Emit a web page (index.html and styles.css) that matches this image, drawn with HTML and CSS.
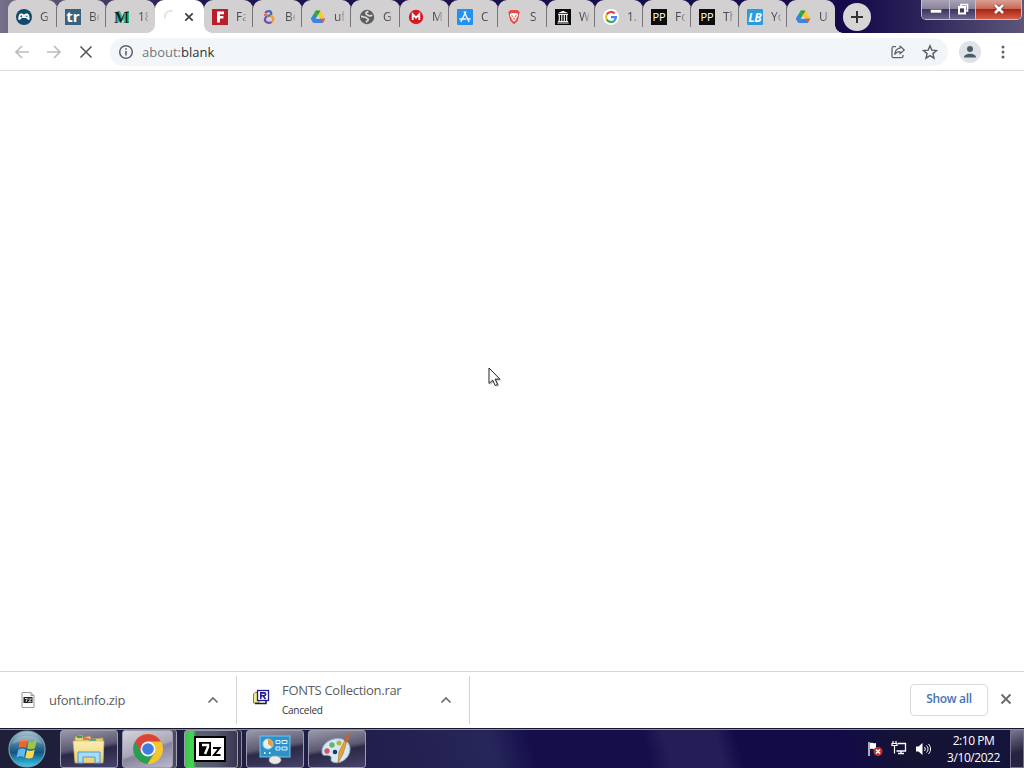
FILE: index.html
```
<!DOCTYPE html>
<html lang="en">
<head>
    <meta charset="utf-8">
    <title>about:blank</title>
    <link rel="stylesheet" href="styles.css">
</head>
<body>
    <svg class="defs" width="0" height="0">
        <defs>
            <linearGradient id="blueball" x1="0" y1="0" x2="0" y2="1">
                <stop offset="0" stop-color="#a9c6cf"/>
                <stop offset=".45" stop-color="#2f6d91"/>
                <stop offset=".6" stop-color="#135582"/>
                <stop offset="1" stop-color="#38d0f0"/>
            </linearGradient>
            <linearGradient id="paper" x1="0" y1="0" x2="0" y2="1">
                <stop offset="0" stop-color="#fbeeb0"/>
                <stop offset="1" stop-color="#e8ce78"/>
            </linearGradient>
            <symbol id="drive" viewBox="0 0 16 16">
                <path d="M5.800 1.500L8 6 3.400 14 .9 9.800z" fill="#1fa85c"/>
                <path d="M.9 9.800L3.400 14l2.400-4.200L3.400 5.700z" fill="#3b82ee"/>
                <path d="M10.400 1.500l4.800 8.300H10L5.400 1.500z" fill="#ffc928"/>
                <path d="M5.400 1.500h5L8 6z" fill="#1a9a52"/>
                <path d="M3.400 14l2.400-4.200h9.400L12.700 14z" fill="#3b82ee"/>
                <path d="M10 9.800h5.200L12.700 14z" fill="#ea5535"/>
                <path d="M8 6l2.200 3.800H5.800z" fill="#d5d1d1"/>
            </symbol>
            <symbol id="caret" viewBox="0 0 12 8">
                <path d="M1.500 6.500L6 2l4.500 4.500" fill="none" stroke="#6b6e72" stroke-width="1.7"/>
            </symbol>
        </defs>
    </svg>

    <div class="tabstrip">
        <div class="tabs">
            <div class="tab">
                <svg class="icon" viewBox="0 0 16 16"><circle cx="8" cy="8" r="8" fill="#124a6e"/><path d="M4.500 4.500h2l.6.7h1.800l.6-.7h2c1.600 0 2.700 5.500 1.900 6.300-1 .9-2.400-.9-3.200-1.700H5.800c-.8.8-2.200 2.600-3.200 1.700C1.800 10 2.900 4.500 4.500 4.500z" fill="#f4f7fa"/><path d="M4.300 7.300h2M5.300 6.300v2M9.600 7.300h2" stroke="#124a6e" stroke-width=".8"/></svg>
                <span class="title">G</span>
            </div>
            <div class="tab">
                <svg class="icon" viewBox="0 0 16 16"><rect width="16" height="16" fill="#37637f"/><text x="8" y="13" class="glyph tr">tr</text></svg>
                <span class="title">Be</span>
            </div>
            <div class="tab">
                <svg class="icon wide" viewBox="0 0 16 16"><path d="M3 2h3l3 7 3-7h3v12h-4V8l-2 4-3-5v6H3z" fill="#20bd8c"/><text x="7.500" y="13.500" class="glyph mm">M</text><path d="M11 4v10" stroke="#20bd8c" stroke-width="1.500"/></svg>
                <span class="title">18</span>
            </div>
            <div class="tab active">
                <svg class="icon" viewBox="0 0 16 16"><path d="M2 9.500A6 6 0 0 1 9.500 2.100" fill="none" stroke="#e2e2e4" stroke-width="1.700"/></svg>
                <svg class="close" viewBox="0 0 10 10"><path d="M1.300 1.300l7.400 7.400M8.700 1.300L1.300 8.700" stroke="#3c4043" stroke-width="1.700"/></svg>
            </div>
            <div class="tab">
                <svg class="icon" viewBox="0 0 16 16"><rect width="16" height="16" fill="#b9202c"/><path d="M5 2.500h7v2.700H7.900v1.900h3.500v2.500H7.900v4H5z" fill="#fff"/></svg>
                <span class="title">Fa</span>
            </div>
            <div class="tab">
                <svg class="icon" viewBox="0 0 16 16"><g fill="none" stroke-width="2.200"><path d="M4.500 4.200C5.500 1.500 10 1.500 10.300 4.300c.1 1.500-1.500 2.400-3.300 2.700" stroke="#4b65b8"/><path d="M9 6.800c3.500.2 4.500 4.500 1.500 6.300" stroke="#f39a2d"/><path d="M10.500 13.100C7 15 3.300 12.700 4 9.700c.2-1 1-2 2.500-2.400" stroke="#6e52a5"/><path d="M3 5.800h3.500" stroke="#ea6a3c"/></g></svg>
                <span class="title">Be</span>
            </div>
            <div class="tab">
                <svg class="icon"><use href="#drive"/></svg>
                <span class="title">uf</span>
            </div>
            <div class="tab">
                <svg class="icon" viewBox="0 0 16 16"><circle cx="8" cy="8" r="7.200" fill="#5c5f62"/><path d="M2 7.500c2-.2 3 .9 4.300.9 1.500 0 1.500 1.300 2.300 1.500 1.200.2.800 1.700-.3 1.900-.9.200-.6 1-1.300 1.500M9.500 2.700C7 2.800 6.500 4.300 7.200 5c1.200 1 2 2 3.700 1.800 1-.1 1.700-.4 2.500-.1" fill="none" stroke="#d8d5d6" stroke-width="1.800"/></svg>
                <span class="title">G</span>
            </div>
            <div class="tab">
                <svg class="icon" viewBox="0 0 16 16"><circle cx="8" cy="8" r="7.200" fill="#dd1626"/><path d="M4.700 11V5.300L8 8.700l3.300-3.400V11" fill="none" stroke="#fff" stroke-width="1.800"/></svg>
                <span class="title">M</span>
            </div>
            <div class="tab">
                <svg class="icon" viewBox="0 0 16 16"><rect width="16" height="16" rx="1" fill="#2491ee"/><path d="M7 2.500l5.200 10.500M9 2.500L3.800 13M2.300 10h7M11 10h2.700" fill="none" stroke="#e8f5ff" stroke-width="1.500"/></svg>
                <span class="title">C</span>
            </div>
            <div class="tab">
                <svg class="icon" viewBox="0 0 16 16"><path d="M4.500 1h7l2.300 2.300-.5 1.200-1.500 7.200L8 15.300l-3.800-3.600-1.500-7.200-.5-1.200z" fill="#e8483e"/><path d="M4.500 4.500L7 4l1 .4L9 4l2.500.5.7 2-2 2.700.3 1.300L8 12.700l-2.500-2.200.3-1.300-2-2.700z" fill="#fff"/><path d="M5.300 6.700L7 7l-.6 1M10.700 6.700L9 7l.6 1M8 8v2M6.500 10.500l1.500-.7 1.500.7" fill="none" stroke="#e8483e" stroke-width=".8"/></svg>
                <span class="title">S</span>
            </div>
            <div class="tab">
                <svg class="icon" viewBox="0 0 16 16"><rect width="16" height="16" fill="#080808"/><path d="M2.500 4.300L8 1.800l5.500 2.500zM3 5h10v1H3zM3 12h10v1H3zM2.300 13.500h11.400v1H2.300z" fill="#eee"/><path d="M4.300 6v6M6.800 6v6M9.300 6v6M11.700 6v6" stroke="#eee" stroke-width="1.200"/></svg>
                <span class="title">W</span>
            </div>
            <div class="tab">
                <svg class="icon" viewBox="0 0 16 16"><circle cx="8" cy="8" r="8" fill="#fff"/><g fill="none" stroke-width="2.200"><path d="M11.700 4.500A5 5 0 0 0 3.700 5.600" stroke="#ea4335"/><path d="M3.700 5.600a5 5 0 0 0 0 4.900" stroke="#fbbc05"/><path d="M3.700 10.500a5 5 0 0 0 7.600 1.300" stroke="#34a853"/><path d="M8 8.100h5a5 5 0 0 1-1.700 3.700" stroke="#4285f4"/></g></svg>
                <span class="title">1.</span>
            </div>
            <div class="tab">
                <svg class="icon" viewBox="0 0 16 16"><rect width="16" height="16" fill="#0c0c0c"/><text x="8" y="12" class="glyph pp">PP</text></svg>
                <span class="title">Fo</span>
            </div>
            <div class="tab">
                <svg class="icon" viewBox="0 0 16 16"><rect width="16" height="16" fill="#0c0c0c"/><text x="8" y="12" class="glyph pp">PP</text></svg>
                <span class="title">Th</span>
            </div>
            <div class="tab">
                <svg class="icon" viewBox="0 0 16 16"><rect width="16" height="16" rx="1" fill="#2b9be0"/><text x="8" y="12.600" class="glyph lb">LB</text></svg>
                <span class="title">Yo</span>
            </div>
            <div class="tab">
                <svg class="icon"><use href="#drive"/></svg>
                <span class="title">U</span>
            </div>
        </div>
        <div class="newtab">
            <svg width="14" height="14" viewBox="0 0 14 14"><path d="M7 1v12M1 7h12" stroke="#333" stroke-width="2"/></svg>
        </div>
        <div class="winbuttons">
            <div class="winbtn min"><svg width="12" height="6" viewBox="0 0 12 6"><rect x=".5" y="1.500" width="11" height="3.500" fill="#fff" stroke="#555" stroke-width=".6"/></svg></div>
            <div class="winbtn max"><svg width="12" height="12" viewBox="0 0 12 12"><path d="M4 3V1.500h6.500V8H9" fill="none" stroke="#fff" stroke-width="1.600"/><rect x="2" y="4" width="6" height="6.500" fill="none" stroke="#fff" stroke-width="2"/></svg></div>
            <div class="winbtn exit"><svg width="12" height="10" viewBox="0 0 12 10"><path d="M2 1l8 8M10 1L2 9" stroke="#693030" stroke-width="4"/><path d="M2 1l8 8M10 1L2 9" stroke="#fff" stroke-width="2.600"/></svg></div>
        </div>
    </div>

    <div class="toolbar">
        <svg class="nav" viewBox="0 0 16 16"><path d="M15 8H2M8 2L2 8l6 6" fill="none" stroke="#babcbe" stroke-width="1.700"/></svg>
        <svg class="nav" viewBox="0 0 16 16"><path d="M1 8h13M8 2l6 6-6 6" fill="none" stroke="#babcbe" stroke-width="1.700"/></svg>
        <svg class="nav" viewBox="0 0 16 16"><path d="M2.500 2.500l11 11M13.500 2.500l-11 11" stroke="#55585c" stroke-width="1.600"/></svg>
        <div class="omnibox">
            <svg width="16" height="16" viewBox="0 0 16 16"><circle cx="8" cy="8" r="6.300" fill="none" stroke="#5f6368" stroke-width="1.500"/><path d="M8 7v4.500M8 4.300v1.500" stroke="#5f6368" stroke-width="1.600"/></svg>
            <span class="url"><span class="scheme">about:</span>blank</span>
            <svg class="share" width="16" height="16" viewBox="0 0 16 16"><path d="M6 2.700H3.500A1.500 1.500 0 0 0 2 4.200v8a1.500 1.500 0 0 0 1.500 1.500h8a1.500 1.500 0 0 0 1.500-1.500V11" fill="none" stroke="#5f6368" stroke-width="1.300"/><path d="M10 2l4.300 4L10 9.800V7.700C7.500 7.700 6 8.500 4.800 10.300 5 7.300 6.700 4.600 10 4.200z" fill="none" stroke="#5f6368" stroke-width="1.200" stroke-linejoin="round"/></svg>
            <svg width="16" height="16" viewBox="0 0 16 16"><path d="M8 1.800l1.800 4.300 4.700.4-3.600 3.100 1.100 4.600-4-2.500-4 2.500 1.100-4.600-3.600-3.100 4.700-.4z" fill="none" stroke="#5a5d61" stroke-width="1.400"/></svg>
        </div>
        <div class="avatar"><svg width="14" height="14" viewBox="0 0 14 14"><circle cx="7" cy="4" r="3" fill="#4d5c69"/><path d="M1 12.500c0-5 12-5 12 0z" fill="#4d5c69"/></svg></div>
        <svg class="more" width="4" height="14" viewBox="0 0 4 14"><g fill="#5f6368"><circle cx="2" cy="2" r="1.500"/><circle cx="2" cy="7" r="1.500"/><circle cx="2" cy="12" r="1.500"/></g></svg>
    </div>

    <div class="page">
        <svg class="cursor" width="16" height="22" viewBox="0 0 16 22"><path d="M1 1v16l3.700-3.500 2.600 5.500 2.500-1.200-2.500-5.300H12z" transform="translate(1.500 1)" fill="#bbb"/><path d="M1 1v15.500l3.700-3.400L7.200 18.500l2.400-1.100-2.500-5.300h4.700z" fill="#fff" stroke="#222" stroke-width="1"/></svg>
    </div>

    <div class="downloads">
        <div class="download first">
            <svg width="16" height="18" viewBox="0 0 16 18"><path d="M2 1.500h9l3 3v12H2z" fill="#fafafa" stroke="#9a9a9a"/><path d="M11 1.500v3h3" fill="none" stroke="#9a9a9a"/><rect x="3.500" y="6" width="9" height="6" fill="#222"/><path d="M5 7.500h2.300L6 11M8.500 8h3l-3 2.700h3" fill="none" stroke="#fff" stroke-width=".8"/></svg>
            <div class="fileinfo"><div class="filename">ufont.info.zip</div></div>
            <svg class="caret"><use href="#caret"/></svg>
        </div>
        <div class="download second">
            <svg class="rar" width="18" height="18" viewBox="0 0 18 18"><path d="M1.500 5L3 3.500h4V14H1.500z" fill="#f0ed8a" stroke="#85803c"/><path d="M3 14.500h11V12" fill="none" stroke="#222" stroke-width="1.500"/><rect x="5.500" y="1.500" width="11" height="10" fill="#fff" stroke="#201b9a" stroke-width="1.300"/><path d="M8.800 10V3.900h3.200c2.200 0 2.200 2.800 0 2.800H9M11.300 7l2.200 3" fill="none" stroke="#201b9a" stroke-width="1.600"/></svg>
            <div class="fileinfo"><div class="filename">FONTS Collection.rar</div><div class="status">Canceled</div></div>
            <svg class="caret"><use href="#caret"/></svg>
        </div>
        <button class="showall">Show all</button>
        <svg class="shelfclose" width="12" height="12" viewBox="0 0 12 12"><path d="M1.500 1.500l9 9M10.500 1.500l-9 9" stroke="#66696d" stroke-width="1.800"/></svg>
    </div>

    <div class="taskbar">
        <svg class="start" width="38" height="38" viewBox="0 0 38 38"><circle cx="19" cy="19" r="18" fill="url(#blueball)" stroke="#7d9cab" stroke-width="1.200"/><path d="M12 10.500c3-2 5-1.500 7.500-.3L18 18c-3-1.300-5-1.200-7.500.3z" fill="#ef6530"/><path d="M20.700 11c3 1.300 5 1 8-.7L27 18.200c-3 1.500-5 1.500-7.800.2z" fill="#9bc746"/><path d="M10.200 19.700c2.800-1.600 5-1.500 7.500-.3L16 27.200c-2.700-1.300-5-1.200-7.500.2z" fill="#62b8ed"/><path d="M19 20c2.800 1.300 5 1 7.800-.4L25 27.300c-2.700 1.500-5 1.500-7.700.4z" fill="#fbd651"/><path d="M4 14C7 3 31 3 34 14c-9-4-21-4-30 0z" fill="#fff" opacity=".2"/></svg>
        <div class="task explorer"><svg width="34" height="32" viewBox="0 0 34 32"><path d="M3 4l7-2 1 3 7-2 1 3 12-1v23H3z" fill="#e6d078" stroke="#b69b4a" stroke-width=".8"/><path d="M5 3h5v2H5z" fill="#29a75b"/><path d="M11 5h6v2h-6z" fill="#df744b"/><path d="M17 6h7v2h-7z" fill="#4a9dc5"/><path d="M1 8h31l-1 22H3z" fill="url(#paper)" stroke="#c8ae5c" stroke-width=".6"/><path d="M6 30V19h22v11h-5v-6H11v6z" fill="#a9dcf2" stroke="#4c9cc8"/></svg></div>
        <div class="task chrome"><svg width="32" height="32" viewBox="0 0 32 32"><circle cx="16" cy="16" r="15" fill="#f5c72c"/><path d="M16 16L3 8.500A15 15 0 0 0 15.500 31l7-11z" fill="#2a9d55"/><path d="M3 8.500A15 15 0 0 1 29 8.500H16L9.500 20z" fill="#db4539"/><circle cx="16" cy="16" r="7.500" fill="#f5f7f8"/><circle cx="16" cy="16" r="5.800" fill="#3e7de0"/></svg></div>
        <div class="task sevenzip"><svg width="32" height="26" viewBox="0 0 32 26"><rect width="32" height="26" fill="#000"/><rect x="2" y="2" width="28" height="22" fill="#fff"/><rect x="5" y="6" width="12" height="14" fill="#000"/><path d="M8 9h6v2L11 18" fill="none" stroke="#fff" stroke-width="2.400"/><path d="M19 12h6.500L20 19h6.500" fill="none" stroke="#000" stroke-width="2"/></svg></div>
        <div class="task panel"><svg width="34" height="32" viewBox="0 0 34 32"><rect x="2" y="3" width="30" height="21" fill="#2e91c8" stroke="#75c5ea"/><circle cx="10" cy="11" r="5" fill="#e5eef0" stroke="#9ed7ef"/><path d="M10 11V6a5 5 0 0 1 4 8z" fill="#f09b3a"/><path d="M18 7.500h4v3h-4zM24 7.500h5v3h-5zM18 14h4v3h-4zM24 14h5v3h-5z" fill="#398fd1" stroke="#d6f4ff"/><path d="M6 20h1.500M11 20h1.500" stroke="#d6f4ff" stroke-width="2"/><ellipse cx="17" cy="27" rx="6" ry="4" fill="#ece8e5" stroke="#aaa" stroke-width=".6"/></svg></div>
        <div class="task paint"><svg width="34" height="34" viewBox="0 0 34 34"><path d="M2 21C1 11 12 5 22 7c8 2 10 10 6 17-4 6-11 8-15 6-4-1 0-5-3-6-3-2-7 1-8-3z" fill="#d7e8f3" stroke="#8db0c7"/><circle cx="7" cy="19" r="2.700" fill="#d65366"/><circle cx="12" cy="13" r="2.700" fill="#65b36e"/><circle cx="19" cy="11" r="2.500" fill="#a9b93e"/><circle cx="15" cy="20" r="2.300" fill="#193d67"/><path d="M18 31l1-11 6-12 2 1-4 13z" fill="#e4a23e" stroke="#ad712b" stroke-width=".6"/><path d="M24 9c-1-3 2-6 7-8-1 5-1 8-5 9z" fill="#a76b4e"/></svg></div>
        <div class="tray">
            <svg width="16" height="16" viewBox="0 0 16 16"><path d="M2 1v14" stroke="#fff" stroke-width="1.300"/><path d="M3 2c3-1 3 1 6 0v6c-3 1-3-1-6 0z" fill="#fff"/><circle cx="11" cy="10.500" r="4.500" fill="#c5302d"/><path d="M9 8.500l4 4M13 8.500l-4 4" stroke="#fff" stroke-width="1.500"/></svg>
            <svg width="16" height="16" viewBox="0 0 16 16"><path d="M7 2.500h7.500v7.500H5.500M7 12.500h6M10 10v2.500" fill="none" stroke="#fff" stroke-width="1.300"/><path d="M2 0v2M5 0v2M1 2.500h5v2H1zM3.500 5v7.500" fill="none" stroke="#fff" stroke-width="1.200"/></svg>
            <svg width="16" height="16" viewBox="0 0 16 16"><path d="M1 5.500h2.500L7.500 2v12l-4-3.500H1z" fill="#fff"/><path d="M9.500 6c1 1.300 1 2.700 0 4M11.500 4.500c2 2 2 5 0 7M13.500 3c2.700 3 2.700 7 0 10" fill="none" stroke="#fff" stroke-width="1"/></svg>
        </div>
        <div class="clock">
            <div>2:10 PM</div>
            <div>3/10/2022</div>
        </div>
        <div class="desktop"></div>
    </div>
</body>
</html>
```

FILE: styles.css
```
* {
    box-sizing: border-box;
}

body {
    margin: 0;
    width: 1024px;
    height: 768px;
    overflow: hidden;
    display: flex;
    flex-direction: column;
    font-family: "Open Sans", "Noto Sans", sans-serif;
    background-color: #ffffff;
}

svg {
    display: block;
    flex-shrink: 0;
}

.defs {
    position: absolute;
}

/* tabs */
.tabstrip {
    height: 33px;
    flex-shrink: 0;
    display: flex;
    padding-left: 8px;
    background: linear-gradient(90deg, #77708a 0, #4e4568 80px, #1d1650 200px, #15094a 850px, #2b2358 920px, #5d5679 1024px);
}

.tabs {
    width: 827px;
    display: grid;
    grid-template-columns: repeat(11, 49px) repeat(6, 48px);
    background: linear-gradient(transparent 60%, #d3d0d1 60%);
}

.tab {
    display: flex;
    align-items: center;
    padding-left: 8px;
    background-color: #d3d0d1;
    border-radius: 9px 9px 0 0;
    position: relative;
    min-width: 0;
}

.tab::after {
    content: "";
    position: absolute;
    right: 0;
    top: 7px;
    width: 1px;
    height: 20px;
    background-color: #77757a;
}

.tab.active {
    background-color: #ffffff;
    z-index: 1;
}

.tab:nth-child(3)::after {
    display: none;
}

/* curved feet */
.tab.active::before,
.tab.active::after,
.tab:last-child::after {
    content: "";
    position: absolute;
    top: auto;
    bottom: 0;
    width: 8px;
    height: 8px;
}

.tab.active::before {
    left: -8px;
    background: radial-gradient(circle at 0 0, transparent 7.5px, #ffffff 8px);
}

.tab.active::after {
    right: -8px;
    background: radial-gradient(circle at 100% 0, transparent 7.5px, #ffffff 8px);
}

.tab:last-child::after {
    right: -8px;
    background: radial-gradient(circle at 100% 0, transparent 7.5px, #d3d0d1 8px);
}

.icon {
    width: 16px;
    height: 16px;
}

.title {
    width: 10px;
    margin-left: 8px;
    overflow: hidden;
    white-space: nowrap;
    font-size: 12px;
    line-height: 16px;
    color: #4a4a4f;
    -webkit-mask-image: linear-gradient(90deg, #000 40%, rgba(0, 0, 0, 0.3));
    mask-image: linear-gradient(90deg, #000 40%, rgba(0, 0, 0, 0.3));
}

.close {
    width: 10px;
    height: 10px;
    margin-left: 5px;
}

.glyph {
    text-anchor: middle;
    fill: #ffffff;
    font-family: "Open Sans", sans-serif;
}

.tr {
    font-size: 15px;
    font-weight: bold;
}

.mm {
    font-family: "Liberation Serif", serif;
    font-size: 16px;
    font-weight: bold;
    fill: #10231f;
}

.pp {
    font-size: 11px;
}

.lb {
    font-size: 12px;
    font-weight: bold;
    font-style: italic;
}

.newtab {
    width: 28px;
    height: 28px;
    margin: 3px 0 0 8px;
    border-radius: 50%;
    background-color: #d8d5d6;
    display: flex;
    align-items: center;
    justify-content: center;
}

.winbuttons {
    width: 101px;
    height: 20px;
    margin-left: auto;
    margin-right: 2px;
    display: flex;
    border: 1px solid #c4bfd0;
    border-top: 0;
    border-radius: 0 0 5px 5px;
    overflow: hidden;
}

.winbtn {
    display: flex;
    align-items: center;
    justify-content: center;
    padding-bottom: 2px;
    background: linear-gradient(#a9a3b5 0, #8a839b 45%, #3d3560 50%, #6c658a 100%);
    border-right: 1px solid #c4bfd0;
}

.min {
    width: 28px;
    padding-top: 5px;
}

.max {
    width: 26px;
}

.exit {
    flex: 1;
    border-right: 0;
    background: linear-gradient(#dba092 0, #c8695a 45%, #a92413 50%, #d4604a 100%);
}

/* toolbar */
.toolbar {
    height: 38px;
    flex-shrink: 0;
    display: flex;
    align-items: center;
    padding-left: 14px;
    border-bottom: 1px solid #dcdcdc;
}

.nav {
    width: 16px;
    height: 16px;
    margin-right: 16px;
}

.omnibox {
    width: 838px;
    height: 28px;
    padding: 0 10px 0 8px;
    display: flex;
    align-items: center;
    border-radius: 14px;
    background-color: #f3f6f8;
}

.url {
    margin-left: 8px;
    font-size: 13px;
    color: #303235;
}

.scheme {
    color: #73767a;
}

.share {
    margin-left: auto;
    margin-right: 16px;
}

.avatar {
    width: 22px;
    height: 22px;
    margin-left: 11px;
    border-radius: 50%;
    background-color: #dfe3e8;
    display: flex;
    align-items: center;
    justify-content: center;
}

.more {
    margin-left: 20px;
}

.page {
    flex: 1;
    position: relative;
}

.cursor {
    position: absolute;
    left: 488px;
    top: 296px;
}

/* download shelf */
.downloads {
    height: 57px;
    flex-shrink: 0;
    display: flex;
    align-items: center;
    border-top: 1px solid #d6d6d6;
}

.download {
    height: 48px;
    display: flex;
    align-items: center;
    border-right: 1px solid #d4d4d4;
}

.first {
    width: 237px;
    padding: 0 17px 0 20px;
}

.second {
    width: 233px;
    padding: 0 17px 1px 15px;
}

.rar {
    margin-bottom: 3px;
}

.fileinfo {
    margin-left: 13px;
}

.second .fileinfo {
    margin-left: 12px;
}

.filename {
    font-size: 13px;
    line-height: 18px;
    letter-spacing: -0.3px;
    color: #5b5c5e;
}

.status {
    margin-top: 3px;
    font-size: 10px;
    line-height: 16px;
    letter-spacing: -0.25px;
    color: #333333;
}

.caret {
    width: 12px;
    height: 8px;
    margin-left: auto;
}

.showall {
    width: 78px;
    height: 32px;
    margin-left: auto;
    margin-bottom: 1px;
    padding: 0 0 2px;
    border: 1px solid #dadce0;
    border-radius: 4px;
    background-color: #ffffff;
    font-family: inherit;
    font-size: 12px;
    font-weight: 600;
    letter-spacing: -0.3px;
    color: #4773b5;
}

.shelfclose {
    margin: 0 12px 2px;
}

/* taskbar */
.taskbar {
    height: 40px;
    flex-shrink: 0;
    display: flex;
    align-items: center;
    padding-left: 8px;
    border-top: 1px solid #17172c;
    box-shadow: inset 0 1px 0 #8c8ba0;
    background: linear-gradient(75deg, #1d2038 0, #201e4a 35%, #27265a 48%, #150e4b 52%, #150e4b 63%, #241d56 65%, #241d56 70%, #120b48 72%, #120b48 82%, #141334 88%, #15133b 100%);
}

.task {
    width: 58px;
    height: 38px;
    margin-right: 4px;
    display: flex;
    align-items: center;
    justify-content: center;
    border: 1px solid #9c9cad;
    border-radius: 3px;
    background: linear-gradient(170deg, #9998a8 0, #5c5a73 45%, #2b2847 55%, #45436a 100%);
}

.explorer {
    margin-left: 14px;
}

.chrome {
    width: 51px;
    margin-right: 11px;
    background: linear-gradient(160deg, #d5d3dc 0, #aaa7b9 50%, #88849d 55%, #bcb8cc 100%);
    box-shadow: 3px 0 0 #4d4b60, 4px 0 0 #a3a2b2;
}

.sevenzip {
    width: 54px;
    margin-right: 8px;
    padding-right: 2px;
    background: linear-gradient(90deg, #39c84a 0, #46d357 8px, #57656c 11px, #57566f 60%, #39374f 100%);
    box-shadow: 3px 0 0 #2a2842, 4px 0 0 #8e8da0;
}

.tray {
    display: flex;
    gap: 8px;
    margin-left: auto;
}

.clock {
    width: 73px;
    margin-left: 6px;
    text-align: center;
    font-size: 12px;
    line-height: 17px;
    letter-spacing: -0.45px;
    color: #ffffff;
}

.desktop {
    width: 14px;
    height: 38px;
    border: 1px solid #74728c;
    background: linear-gradient(160deg, #77768c, #25233f 60%);
}
```
